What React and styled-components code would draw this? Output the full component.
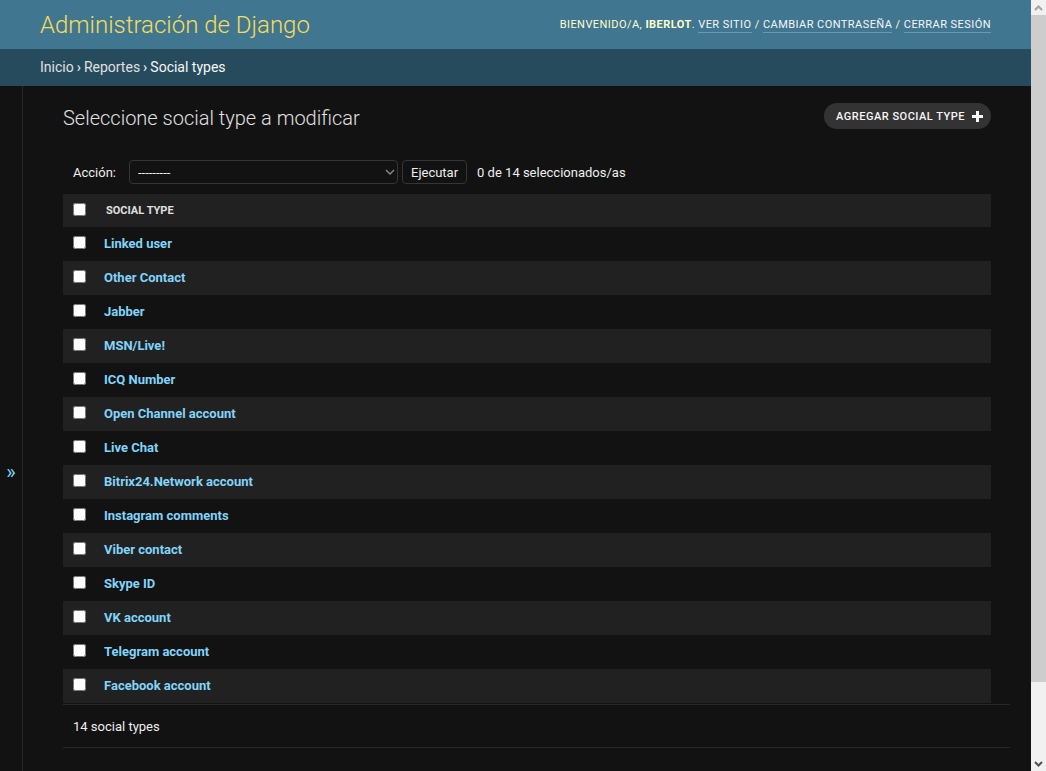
import React from "react";
import styled, { createGlobalStyle } from "styled-components";

const Global = createGlobalStyle`
  html { background: #121212; }
  body {
    margin: 0;
    padding-right: 15px;
    background: #121212;
    color: #eeeeee;
    font-family: Roboto, "Liberation Sans", sans-serif;
    font-size: 14px;
  }
  * { box-sizing: border-box; }
`;

const Scrollbar = styled.div`
  position: fixed;
  top: 0;
  right: 0;
  width: 15px;
  height: 100vh;
  background: #f1f1f1;
  display: flex;
  flex-direction: column;
  align-items: center;
  z-index: 10;
`;

const ScrollArrow = styled.div`
  flex: 0 0 15px;
  width: 15px;
  display: flex;
  align-items: center;
  justify-content: center;
`;

const ScrollThumb = styled.div`
  flex: 0 0 667px;
  width: 15px;
  background: #cdcdcd;
`;

const ScrollTrack = styled.div`
  flex: 1;
`;

const Header = styled.header`
  height: 49px;
  background: #417690;
  display: flex;
  align-items: center;
  justify-content: space-between;
  padding: 0 40px;
`;

const Branding = styled.h1`
  margin: 0;
  font-size: 24px;
  font-weight: 300;
  color: #f5dd5d;
  line-height: 1;
`;

const UserTools = styled.div`
  font-size: 11px;
  letter-spacing: 0.45px;
  text-transform: uppercase;
  color: #ffffcc;
  font-weight: 400;
  & strong { font-weight: 700; }
`;

const ToolLink = styled.a`
  color: #f7f7f7;
  text-decoration: none;
  border-bottom: 1px solid rgba(255, 255, 255, 0.25);
  padding-bottom: 1px;
`;

const Breadcrumbs = styled.nav`
  height: 37px;
  background: #264b5d;
  padding: 0 40px 2px;
  display: flex;
  align-items: center;
  font-size: 14px;
  color: #f7f7f7;
  & a { color: #e0e0e0; text-decoration: none; }
`;

const Sep = styled.span`
  margin: 0 3px;
`;

const Main = styled.div`
  display: flex;
  min-height: 771px;
`;

const SidebarToggle = styled.button`
  flex: 0 0 23px;
  width: 23px;
  height: 771px;
  background: #121212;
  border: 0;
  border-right: 1px solid #272727;
  color: #81d4fa;
  font-size: 20px;
  font-family: Roboto, "Liberation Sans", sans-serif;
  padding: 0;
  display: flex;
  align-items: center;
  justify-content: center;
  cursor: pointer;
`;

const Content = styled.div`
  flex: 1;
  padding: 17px 21px 20px 40px;
`;

const TitleRow = styled.div`
  display: flex;
  justify-content: space-between;
  align-items: flex-start;
  margin-right: 19px;
`;

const Title = styled.h1`
  margin: 3px 0 0;
  font-size: 20px;
  font-weight: 300;
  color: #e0e0e0;
  line-height: 1.2;
`;

const AddButton = styled.a`
  height: 26px;
  display: flex;
  align-items: center;
  gap: 7px;
  padding: 0 8px 0 12px;
  border-radius: 15px;
  background: #333333;
  color: #f7f7f7;
  font-size: 11px;
  font-weight: 500;
  letter-spacing: 0.5px;
  text-transform: uppercase;
  text-decoration: none;
`;

const Actions = styled.div`
  display: flex;
  align-items: center;
  margin: 30px 0 10px 10px;
  height: 24px;
  font-size: 13px;
  color: #eeeeee;
`;

const ActionLabel = styled.label`
  margin-right: 13px;
`;

const SelectWrap = styled.div`
  position: relative;
  width: 269px;
  height: 24px;
`;

const Select = styled.select`
  appearance: none;
  width: 100%;
  height: 24px;
  background: #121212;
  color: #eeeeee;
  border: 1px solid #353535;
  border-radius: 4px;
  font-family: Roboto, "Liberation Sans", sans-serif;
  font-size: 13px;
  padding: 0 8px;
  outline: none;
`;

const Chevron = styled.svg`
  position: absolute;
  right: 3px;
  top: 9px;
  pointer-events: none;
`;

const RunButton = styled.button`
  margin-left: 4px;
  height: 24px;
  padding: 0 8px;
  background: #121212;
  border: 1px solid #353535;
  border-radius: 4px;
  color: #eeeeee;
  font-family: Roboto, "Liberation Sans", sans-serif;
  font-size: 13px;
`;

const Counter = styled.span`
  margin-left: 10px;
`;

const Table = styled.table`
  width: calc(100% - 19px);
  border-collapse: collapse;
  font-size: 13px;
`;

const HeadCell = styled.th`
  height: 33px;
  background: #212121;
  text-align: left;
  padding: 0 0 0 ${(p) => p.$pl || 10}px;
  font-size: 11px;
  font-weight: 700;
  text-transform: uppercase;
  color: #e0e0e0;
  width: ${(p) => (p.$w ? p.$w + "px" : "auto")};
  vertical-align: middle;
`;

const Row = styled.tr`
  background: ${(p) => (p.$alt ? "#212121" : "#121212")};
`;

const Cell = styled.td`
  height: 34px;
  padding: 0 0 1px ${(p) => p.$pl || 10}px;
  vertical-align: middle;
  width: ${(p) => (p.$w ? p.$w + "px" : "auto")};
`;

const Check = styled.input.attrs({ type: "checkbox" })`
  margin: 0;
  width: 13px;
  height: 13px;
  display: block;
  position: relative;
  top: ${(p) => (p.$head ? -1 : -1)}px;
`;

const RowLink = styled.a`
  color: #81d4fa;
  font-weight: 700;
  text-decoration: none;
`;

const Paginator = styled.p`
  margin: 1px 0 0;
  height: 44px;
  display: flex;
  align-items: center;
  padding-left: 10px;
  font-size: 13px;
  color: #eeeeee;
  border-top: 1px solid #272727;
  border-bottom: 1px solid #272727;
`;

const items = [
  "Linked user",
  "Other Contact",
  "Jabber",
  "MSN/Live!",
  "ICQ Number",
  "Open Channel account",
  "Live Chat",
  "Bitrix24.Network account",
  "Instagram comments",
  "Viber contact",
  "Skype ID",
  "VK account",
  "Telegram account",
  "Facebook account",
];

export default function App() {
  return (
    <>
      <Global />
      <Scrollbar>
        <ScrollArrow>
          <svg width="9" height="6" viewBox="0 0 9 6">
            <path d="M1 5l3.5-3.5L8 5" fill="none" stroke="#a3a3a3" strokeWidth="2" />
          </svg>
        </ScrollArrow>
        <ScrollThumb />
        <ScrollTrack />
        <ScrollArrow>
          <svg width="9" height="6" viewBox="0 0 9 6">
            <path d="M1 1l3.5 3.5L8 1" fill="none" stroke="#505050" strokeWidth="2" />
          </svg>
        </ScrollArrow>
      </Scrollbar>
      <Header>
        <Branding>Administración de Django</Branding>
        <UserTools>
          Bienvenido/a, <strong>iberlot</strong>.{" "}
          <ToolLink href="#">Ver sitio</ToolLink> /{" "}
          <ToolLink href="#">Cambiar contraseña</ToolLink> /{" "}
          <ToolLink href="#">Cerrar sesión</ToolLink>
        </UserTools>
      </Header>
      <Breadcrumbs>
        <a href="#">Inicio</a>
        <Sep>›</Sep>
        <a href="#">Reportes</a>
        <Sep>›</Sep>
        <span>Social types</span>
      </Breadcrumbs>
      <Main>
        <SidebarToggle>»</SidebarToggle>
        <Content>
          <TitleRow>
            <Title>Seleccione social type a modificar</Title>
            <AddButton href="#">
              Agregar social type
              <svg width="11" height="11" viewBox="0 0 11 11">
                <path d="M4 0h3v4h4v3H7v4H4V7H0V4h4z" fill="#f7f7f7" />
              </svg>
            </AddButton>
          </TitleRow>
          <Actions>
            <ActionLabel>Acción:</ActionLabel>
            <SelectWrap>
              <Select defaultValue="">
                <option value="">---------</option>
              </Select>
              <Chevron width="10" height="7" viewBox="0 0 10 7">
                <path d="M1 1l4 4 4-4" fill="none" stroke="#8a8a8a" strokeWidth="1.4" />
              </Chevron>
            </SelectWrap>
            <RunButton>Ejecutar</RunButton>
            <Counter>0 de 14 seleccionados/as</Counter>
          </Actions>
          <Table>
            <thead>
              <tr>
                <HeadCell $w={31}>
                  <Check $head />
                </HeadCell>
                <HeadCell $pl={12}>Social type</HeadCell>
              </tr>
            </thead>
            <tbody>
              {items.map((name, i) => (
                <Row key={name} $alt={i % 2 === 1}>
                  <Cell $w={31}>
                    <Check />
                  </Cell>
                  <Cell $pl={10}>
                    <RowLink href="#">{name}</RowLink>
                  </Cell>
                </Row>
              ))}
            </tbody>
          </Table>
          <Paginator>14 social types</Paginator>
        </Content>
      </Main>
    </>
  );
}
